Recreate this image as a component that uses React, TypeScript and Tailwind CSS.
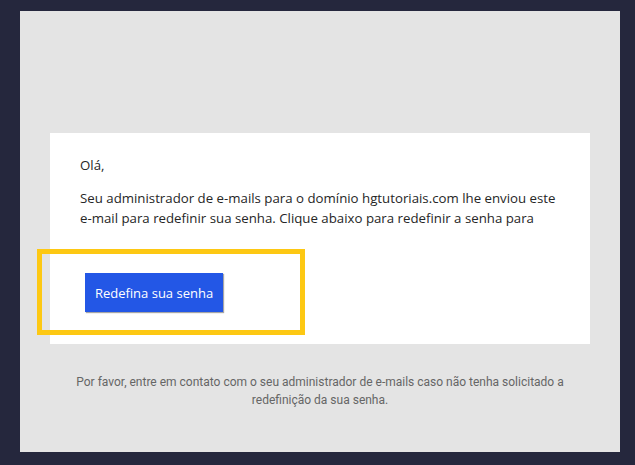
export default function App() {
  return (
    <div className="h-[465px] w-[635px] bg-[#25273d] pt-[11px] pl-[20px] pr-[15px] font-['Open_Sans',sans-serif]">
      <div className="h-[441px] bg-[#e4e4e4] pt-[122px] px-[30px]">
        <div className="relative h-[211px] bg-white pl-[30px] pr-[30px] pt-[22px] text-[13.25px] leading-[20px] text-[#262626]">
          <p>Olá,</p>
          <p className="mt-[13px]">
            Seu administrador de e-mails para o domínio hgtutoriais.com lhe enviou este
            <br />
            e-mail para redefinir sua senha. Clique abaixo para redefinir a senha para
          </p>
          <button className="mt-[45px] ml-[5px] h-[39px] w-[138px] bg-[#2357e6] text-[13px] text-white shadow-[1px_1px_1px_rgba(0,0,0,0.35)]">
            Redefina sua senha
          </button>
          <div className="absolute left-[-13px] top-[116px] h-[86px] w-[268px] border-[5px] border-[#fdc813]" />
        </div>
        <p className="mt-[29px] text-center text-[12px] leading-[18px] text-[#666666] font-['Liberation_Sans_Narrow','Roboto',sans-serif]">
          Por favor, entre em contato com o seu administrador de e-mails caso não tenha solicitado a
          <br />
          redefinição da sua senha.
        </p>
      </div>
    </div>
  );
}
